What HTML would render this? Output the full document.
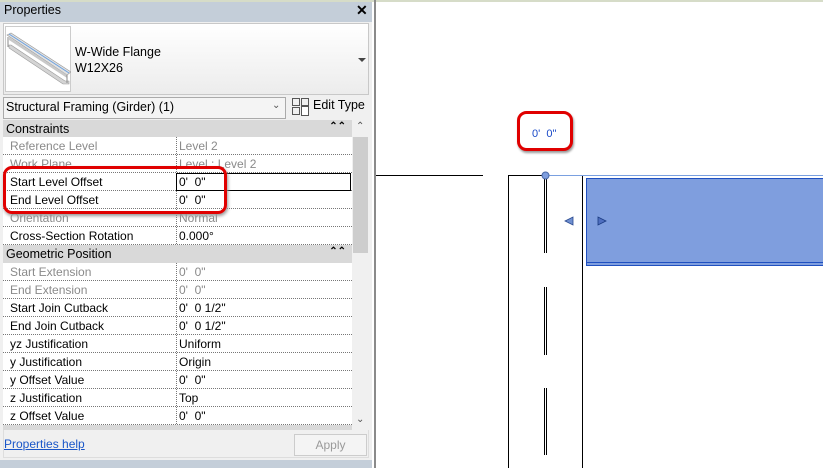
<!DOCTYPE html>
<html><head><style>
*{margin:0;padding:0;box-sizing:border-box}
body{width:823px;height:468px;overflow:hidden;background:#fff;font-family:"Liberation Sans",sans-serif;font-size:12px;position:relative;color:#000}
.a{position:absolute}
.row{position:absolute;left:3px;width:349px;height:18px;border-bottom:1px dotted #777;background:#fff}
.row span{position:absolute;top:2px;white-space:nowrap}
.row .k{left:7px}
.row .v{left:173px;border-left:1px dotted #777;height:17px;top:0;padding:2px 0 0 2px}
.g{color:#8a8a8a}
.hd{position:absolute;left:3px;width:349px;height:18px;background:#d9d9d9;font-size:12.5px}
.hd span{position:absolute;left:3px;top:2px}
.hd i{position:absolute;right:6px;top:1px;font-style:normal;font-size:10px;font-weight:bold}
</style></head><body>
<div class="a" style="left:0;top:0;width:372px;height:468px;background:#f0f0f0"></div>
<div class="a" style="left:0;top:0;width:372px;height:22px;background:#c4ced9"></div>
<div class="a" style="left:4px;top:3px;font-size:12.5px">Properties</div>
<div class="a" style="left:356px;top:2px;font-size:14px;font-weight:bold">✕</div>
<div class="a" style="left:3px;top:23px;width:366px;height:72px;border:1px solid #c8c8c8;background:linear-gradient(#fff,#ececec)"></div>
<div class="a" style="left:5px;top:26px;width:66px;height:66px;border:1px solid #ccc;background:#fff"></div>
<svg class="a" style="left:5px;top:26px" width="66" height="66">
<polygon points="2,9 6,7 66,46 62,49" fill="#e2e2e2" stroke="#999" stroke-width=".6"/>
<line x1="4" y1="8" x2="64" y2="47" stroke="#6aa0e0" stroke-width="1"/>
<polygon points="4,11 62,49 62,52 4,14" fill="#c9c9c9"/>
<polygon points="6,19 60,55 64,55 64,58 58,58 4,22 4,19" fill="#d4d4d4" stroke="#999" stroke-width=".6"/>
<line x1="3" y1="11" x2="3" y2="21" stroke="#888"/>
<line x1="62" y1="49" x2="62" y2="57" stroke="#888"/>
</svg>
<div class="a" style="left:75px;top:44px;font-size:12.5px;line-height:16px">W-Wide Flange<br>W12X26</div>
<div class="a" style="left:358px;top:58px;width:0;height:0;border-left:4px solid transparent;border-right:4px solid transparent;border-top:4px solid #444"></div>
<div class="a" style="left:3px;top:97px;width:283px;height:22px;border:1px solid #aaa;background:#f4f4f4"></div>
<div class="a" style="left:6px;top:100px;font-size:12.5px">Structural Framing (Girder) (1)</div>
<div class="a" style="left:272px;top:100px;font-size:10px;color:#555">⌄</div>
<svg class="a" style="left:291px;top:97px" width="20" height="20"><rect x="1.5" y="1.5" width="7" height="7" fill="none" stroke="#555"/><rect x="1.5" y="10.5" width="7" height="7" fill="none" stroke="#555"/><rect x="10.5" y="1.5" width="7" height="7" fill="none" stroke="#555"/><rect x="10.5" y="9.5" width="7" height="9" fill="#fff" stroke="#555"/></svg>
<div class="a" style="left:313px;top:98px;font-size:12.5px">Edit Type</div>
<div class="hd" style="top:120px"><span>Constraints</span><i>⌃⌃</i></div>
<div class="row" style="top:137px"><span class="k g">Reference Level</span><span class="v g">Level 2</span></div>
<div class="row" style="top:155px"><span class="k g">Work Plane</span><span class="v g">Level : Level 2</span></div>
<div class="row" style="top:173px"><span class="k">Start Level Offset</span><span class="v">0'&nbsp; 0"</span></div>
<div class="a" style="left:176px;top:173px;width:175px;height:18px;border:1px solid #000"></div>
<div class="row" style="top:191px"><span class="k">End Level Offset</span><span class="v">0'&nbsp; 0"</span></div>
<div class="row" style="top:209px"><span class="k g">Orientation</span><span class="v g">Normal</span></div>
<div class="row" style="top:227px"><span class="k">Cross-Section Rotation</span><span class="v">0.000°</span></div>
<div class="hd" style="top:245px"><span>Geometric Position</span><i>⌃⌃</i></div>
<div class="row" style="top:263px"><span class="k g">Start Extension</span><span class="v g">0'&nbsp; 0"</span></div>
<div class="row" style="top:281px"><span class="k g">End Extension</span><span class="v g">0'&nbsp; 0"</span></div>
<div class="row" style="top:299px"><span class="k">Start Join Cutback</span><span class="v">0'&nbsp; 0 1/2"</span></div>
<div class="row" style="top:317px"><span class="k">End Join Cutback</span><span class="v">0'&nbsp; 0 1/2"</span></div>
<div class="row" style="top:335px"><span class="k">yz Justification</span><span class="v">Uniform</span></div>
<div class="row" style="top:353px"><span class="k">y Justification</span><span class="v">Origin</span></div>
<div class="row" style="top:371px"><span class="k">y Offset Value</span><span class="v">0'&nbsp; 0"</span></div>
<div class="row" style="top:389px"><span class="k">z Justification</span><span class="v">Top</span></div>
<div class="row" style="top:407px"><span class="k">z Offset Value</span><span class="v">0'&nbsp; 0"</span></div>
<div class="a" style="left:3px;top:425px;width:349px;height:5px;background:#d9d9d9"></div>
<div class="a" style="left:353px;top:120px;width:15px;height:310px;background:#f0f0f0"></div>
<div class="a" style="left:353px;top:137px;width:15px;height:116px;background:#cdcdcd"></div>
<div class="a" style="left:356px;top:121px;font-size:10px;color:#555">⌃</div>
<div class="a" style="left:356px;top:414px;font-size:10px;color:#555">⌄</div>
<div class="a" style="left:4px;top:437px;color:#1a56c8;text-decoration:underline">Properties help</div>
<div class="a" style="left:294px;top:434px;width:73px;height:22px;border:1px solid #ccc;background:#f4f4f4;color:#9a9a9a;text-align:center;line-height:20px">Apply</div>
<div class="a" style="left:3px;top:430px;width:366px;height:28px;border:1px solid #ddd;border-top:none"></div>
<div class="a" style="left:0;top:460px;width:372px;height:8px;background:#c4ced9"></div>
<div class="a" style="left:0;top:0;width:823px;height:2px;background:#d6dcc8"></div>
<div class="a" style="left:374px;top:0;width:2px;height:468px;background:#8a8a8a"></div>
<svg class="a" style="left:376px;top:0" width="447" height="468">
<line x1="0" y1="175.5" x2="107" y2="175.5" stroke="#000"/>
<line x1="132.5" y1="175" x2="132.5" y2="468" stroke="#000"/>
<line x1="206.5" y1="175" x2="206.5" y2="468" stroke="#000"/>
<line x1="132" y1="175.5" x2="169" y2="175.5" stroke="#000"/>
<line x1="169" y1="175.5" x2="447" y2="175.5" stroke="#7aa0e0"/>
<rect x="210.5" y="178.5" width="240" height="87" fill="#7f9ede" stroke="#2050c0"/>
<line x1="210" y1="262.5" x2="447" y2="262.5" stroke="#2050c0"/>
<g stroke="#000"><line x1="168.5" y1="178" x2="168.5" y2="253"/><line x1="170.5" y1="178" x2="170.5" y2="253"/>
<line x1="168.5" y1="287" x2="168.5" y2="355"/><line x1="170.5" y1="287" x2="170.5" y2="355"/>
<line x1="168.5" y1="388" x2="168.5" y2="455"/><line x1="170.5" y1="388" x2="170.5" y2="455"/></g>
<circle cx="169.5" cy="175.5" r="3.5" fill="#7f9ede" stroke="#4a6aa8"/>
<polygon points="189,221 197,217 197,225" fill="#6f8fd0" stroke="#2a4a90" stroke-width=".8"/>
<polygon points="222,217 222,225 230,221" fill="#4f6fc0" stroke="#1a3a80" stroke-width=".8"/>
<rect x="142.5" y="112.5" width="53" height="37" rx="8" fill="#fff" stroke="#e00000" stroke-width="3" style="filter:drop-shadow(1px 2px 1px #999)"/>
<text x="156" y="137" font-size="11" fill="#1a4ac8" font-family="Liberation Sans">0'&#160; 0"</text>
</svg>
<div class="a" style="left:3px;top:166px;width:224px;height:48px;border:3px solid #e00000;border-radius:9px;box-shadow:1px 2px 3px #999"></div>
</body></html>
